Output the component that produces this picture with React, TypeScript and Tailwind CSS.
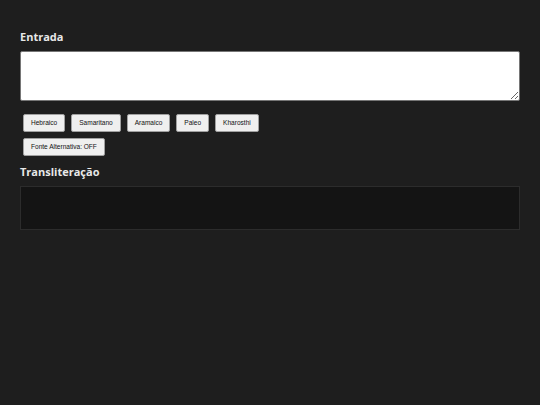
export default function App() {
  const scripts = ["Hebraico", "Samaritano", "Aramaico", "Paleo", "Kharosthi"];
  const btn =
    "m-[3px] h-[18px] px-[7px] bg-[#efefef] border border-[#a0a0a0] rounded-[2px] text-[6.55px] text-[#111] font-['Liberation_Sans',Arial,sans-serif] leading-none";
  return (
    <div className="min-h-[405px] bg-[#1e1e1e] px-5 pt-[29px] font-['Open_Sans',sans-serif]">
      <h2 className="text-[11px] font-bold text-[#e8e8e8] leading-[15px]">Entrada</h2>
      <textarea className="mt-[7px] block w-full h-[50px] bg-white border border-[#767676] rounded-[2px]" />
      <div className="mt-[10px]">
        <div className="flex">
          {scripts.map((s) => (
            <button key={s} className={btn}>
              {s}
            </button>
          ))}
        </div>
        <div className="flex">
          <button className={btn}>Fonte Alternativa: OFF</button>
        </div>
      </div>
      <h2 className="mt-[5px] text-[11px] font-bold text-[#e8e8e8] leading-[15px]">Transliteração</h2>
      <div className="mt-[7px] h-[44px] bg-[#141414] border border-[#2c2c2c]" />
    </div>
  );
}
